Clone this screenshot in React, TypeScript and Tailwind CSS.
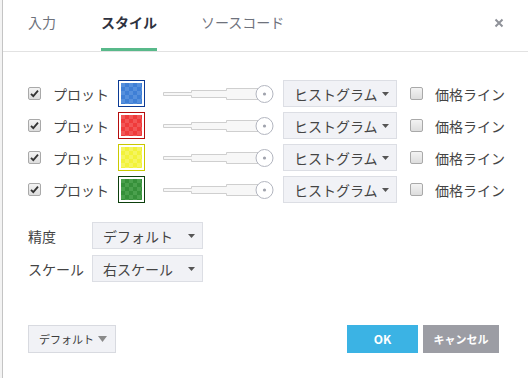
import React from 'react';

const font = { fontFamily: '"Noto Sans CJK JP", "Noto Sans", sans-serif' };

const plots = [
  { id: 'blue', border: 'border-[#0b3a94]', a: '#3f7fd6', b: '#5690dd' },
  { id: 'red', border: 'border-[#b40d0d]', a: '#ef3b3b', b: '#f25656' },
  { id: 'yellow', border: 'border-[#c9c900]', a: '#f2f23a', b: '#f5f560' },
  { id: 'green', border: 'border-[#0d3f0d]', a: '#36903a', b: '#4aa04d' },
];

const Check = ({ checked }: { checked: boolean }) => (
  <svg width="13" height="13" viewBox="0 0 13 13" className="shrink-0">
    <defs>
      <linearGradient id="cbg" x1="0" y1="0" x2="0" y2="1">
        <stop offset="0" stopColor="#f4f4f4" />
        <stop offset="1" stopColor="#dcdcdc" />
      </linearGradient>
    </defs>
    <rect x="0.5" y="0.5" width="12" height="12" rx="1.5" fill="url(#cbg)" stroke="#a9a9a9" />
    {checked && <path d="M3 6.8 L5.3 9.2 L10 3.6" fill="none" stroke="#333" strokeWidth="1.8" />}
  </svg>
);

const Swatch = ({ id, border, a, b }: { id: string; border: string; a: string; b: string }) => (
  <div className={`w-[27px] h-[27px] border-[1.5px] ${border} bg-white p-[2px] shrink-0`}>
    <svg width="21" height="21" className="block">
      <defs>
        <pattern id={`p-${id}`} width="8" height="8" patternUnits="userSpaceOnUse">
          <rect width="8" height="8" fill={a} />
          <rect width="4" height="4" fill={b} />
          <rect x="4" y="4" width="4" height="4" fill={b} />
        </pattern>
      </defs>
      <rect width="21" height="21" fill={`url(#p-${id})`} />
    </svg>
  </div>
);

const Slider = () => (
  <svg width="112" height="20" viewBox="0 0 112 20" className="shrink-0">
    <path
      d="M0.5 8.5 H28.5 V6.5 H63.5 V4.5 H95 V15.5 H63.5 V13.5 H28.5 V11.5 H0.5 Z"
      fill="#f7f7f7"
      stroke="#cfcfcf"
    />
    <circle cx="101.5" cy="10" r="8.5" fill="#fff" stroke="#b3b6c0" />
    <circle cx="101.5" cy="10" r="1.6" fill="#a0a3ad" />
  </svg>
);

const Caret = ({ size = 'sm' }: { size?: 'sm' | 'lg' }) =>
  size === 'sm' ? (
    <svg width="7" height="4" viewBox="0 0 7 4" className="shrink-0">
      <path d="M0 0 H7 L3.5 4 Z" fill="#555" />
    </svg>
  ) : (
    <svg width="9" height="6" viewBox="0 0 9 6" className="shrink-0">
      <path d="M0 0 H9 L4.5 6 Z" fill="#8a8a8a" />
    </svg>
  );

const Select = ({ label, width }: { label: string; width: string }) => (
  <div
    className={`${width} h-[27px] shrink-0 flex items-center justify-between pl-[10px] pr-[7px] bg-[#f1f2f6] border border-[#dcdee4] text-[14px] leading-none text-[#444] whitespace-nowrap`}
  >
    <span>{label}</span>
    <Caret />
  </div>
);

export default function App() {
  return (
    <div className="w-[528px] h-[378px] flex bg-white overflow-hidden" style={font}>
      <div className="w-[2px] bg-[#f3f3f3] shrink-0" />
      <div className="flex-1 flex flex-col border-l border-[#c4c4c4]">
        {/* タブ */}
        <div className="h-[52px] border-b border-[#e2e2e2] flex items-stretch pl-[25px] pr-[24px]">
          <div className="flex items-center pb-[4px] text-[14px] text-[#6e727c] border-b-2 border-transparent">
            入力
          </div>
          <div className="ml-[45px] flex items-center pb-[4px] text-[14px] font-bold text-[#2e3240] border-b-[3px] border-[#58b98a]">
            スタイル
          </div>
          <div className="ml-[44px] flex items-center pb-[4px] text-[14px] text-[#6e727c] border-b-2 border-transparent">
            ソースコード
          </div>
          <div className="ml-auto flex items-center pb-[6px]">
            <svg width="10" height="10" viewBox="0 0 10 10">
              <path d="M1.5 1.5 L8.5 8.5 M8.5 1.5 L1.5 8.5" stroke="#8f9299" strokeWidth="2" />
            </svg>
          </div>
        </div>

        {/* プロット設定 */}
        <div className="pt-[28px] pl-[25px] flex flex-col gap-[5px]">
          {plots.map((p) => (
            <div key={p.id} className="h-[27px] flex items-center">
              <Check checked />
              <span className="ml-[12px] w-[65px] text-[14px] leading-none text-[#444]">プロット</span>
              <Swatch {...p} />
              <div className="ml-[18px]">
                <Slider />
              </div>
              <div className="ml-[8px]">
                <Select label="ヒストグラム" width="w-[114px]" />
              </div>
              <div className="ml-[13px]">
                <Check checked={false} />
              </div>
              <span className="ml-[12px] text-[14px] leading-none text-[#444]">価格ライン</span>
            </div>
          ))}
        </div>

        <div className="mt-[19px] pl-[25px] flex flex-col gap-[6px]">
          <div className="h-[27px] flex items-center">
            <span className="w-[64px] text-[14px] leading-none text-[#444]">精度</span>
            <Select label="デフォルト" width="w-[111px]" />
          </div>
          <div className="h-[27px] flex items-center">
            <span className="w-[64px] text-[14px] leading-none text-[#444]">スケール</span>
            <Select label="右スケール" width="w-[111px]" />
          </div>
        </div>

        {/* フッター */}
        <div className="mt-[43px] pl-[25px] pr-[29px] flex items-center">
          <div className="w-[88px] h-[28px] flex items-center justify-between pl-[10px] pr-[8px] bg-[#f1f2f6] border border-[#d8dae0] text-[11px] leading-none text-[#3c3c3c] whitespace-nowrap">
            <span>デフォルト</span>
            <Caret size="lg" />
          </div>
          <div className="ml-auto w-[71px] h-[28px] flex items-center justify-center bg-[#3bb3e4] text-white text-[12px] font-bold leading-none">
            OK
          </div>
          <div className="ml-[5px] w-[76px] h-[28px] flex items-center justify-center bg-[#9c9da4] text-white text-[11px] font-bold leading-none whitespace-nowrap">
            キャンセル
          </div>
        </div>
      </div>
    </div>
  );
}
